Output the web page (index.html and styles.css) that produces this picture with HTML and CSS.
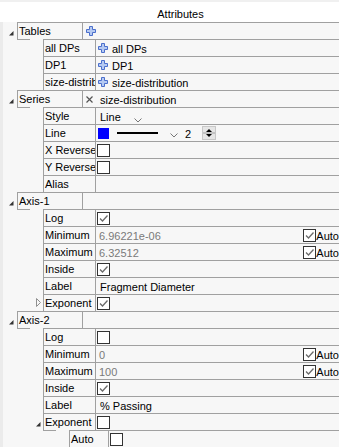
FILE: index.html
```html
<!DOCTYPE html>
<html lang="en">
  <head>
    <meta charset="UTF-8" />
    <title>Attributes</title>
    <link rel="stylesheet" href="styles.css">
  </head>
  <body>
    <div class="title">Attributes</div>
    <div class="tree">
      <!-- Tables -->
      <div class="row l0">
        <span class="gut"><svg class="tw" width="5" height="5"><polygon points="4.5,0 4.5,4.5 0,4.5" /></svg></span>
        <span class="key">Tables</span>
        <span class="val pad0"><svg class="plus" width="10" height="10"><polygon points="3.5,0.5 6.5,0.5 6.5,3.5 9.5,3.5 9.5,6.5 6.5,6.5 6.5,9.5 3.5,9.5 3.5,6.5 0.5,6.5 0.5,3.5 3.5,3.5" /></svg></span>
      </div>
      <div class="row l1 first">
        <span class="gut"></span>
        <span class="key">all DPs</span>
        <span class="val"><svg class="plus" width="10" height="10"><polygon points="3.5,0.5 6.5,0.5 6.5,3.5 9.5,3.5 9.5,6.5 6.5,6.5 6.5,9.5 3.5,9.5 3.5,6.5 0.5,6.5 0.5,3.5 3.5,3.5" /></svg><span class="txt after">all DPs</span></span>
      </div>
      <div class="row l1">
        <span class="gut"></span>
        <span class="key">DP1</span>
        <span class="val"><svg class="plus" width="10" height="10"><polygon points="3.5,0.5 6.5,0.5 6.5,3.5 9.5,3.5 9.5,6.5 6.5,6.5 6.5,9.5 3.5,9.5 3.5,6.5 0.5,6.5 0.5,3.5 3.5,3.5" /></svg><span class="txt after">DP1</span></span>
      </div>
      <div class="row l1">
        <span class="gut"></span>
        <span class="key">size-distrib</span>
        <span class="val"><svg class="plus" width="10" height="10"><polygon points="3.5,0.5 6.5,0.5 6.5,3.5 9.5,3.5 9.5,6.5 6.5,6.5 6.5,9.5 3.5,9.5 3.5,6.5 0.5,6.5 0.5,3.5 3.5,3.5" /></svg><span class="txt after">size-distribution</span></span>
      </div>

      <!-- Series -->
      <div class="row l0">
        <span class="gut"><svg class="tw" width="5" height="5"><polygon points="4.5,0 4.5,4.5 0,4.5" /></svg></span>
        <span class="key">Series</span>
        <span class="val pad0"><svg class="del" width="7" height="7"><path d="M0.5 0.5 L6.5 6.5 M6.5 0.5 L0.5 6.5" /></svg><span class="txt after-x">size-distribution</span></span>
      </div>
      <div class="row l1 first">
        <span class="gut"></span>
        <span class="key">Style</span>
        <span class="val"><span class="txt">Line</span><svg class="chev style-chev" width="8" height="5"><polyline points="0.5,0.5 4,4 7.5,0.5" /></svg></span>
      </div>
      <div class="row l1">
        <span class="gut"></span>
        <span class="key">Line</span>
        <span class="val">
          <span class="swatch"></span>
          <span class="stroke"></span>
          <svg class="chev line-chev" width="8" height="5"><polyline points="0.5,0.5 4,4 7.5,0.5" /></svg>
          <span class="txt width-num">2</span>
          <span class="spin"><svg width="12" height="12"><polygon points="3,5 6,2 9,5" /><polygon points="3,7 6,10 9,7" /><line x1="0" y1="6" x2="12" y2="6" /></svg></span>
        </span>
      </div>
      <div class="row l1">
        <span class="gut"></span>
        <span class="key">X Reverse</span>
        <span class="val"><span class="cb"></span></span>
      </div>
      <div class="row l1">
        <span class="gut"></span>
        <span class="key">Y Reverse</span>
        <span class="val"><span class="cb"></span></span>
      </div>
      <div class="row l1">
        <span class="gut"></span>
        <span class="key">Alias</span>
        <span class="val"></span>
      </div>

      <!-- Axis-1 -->
      <div class="row l0">
        <span class="gut"><svg class="tw" width="5" height="5"><polygon points="4.5,0 4.5,4.5 0,4.5" /></svg></span>
        <span class="key">Axis-1</span>
        <span class="val pad0"></span>
      </div>
      <div class="row l1 first">
        <span class="gut"></span>
        <span class="key">Log</span>
        <span class="val"><span class="cb"><svg width="11" height="11"><polyline points="2,5.5 4.5,8 9.5,2.5" /></svg></span></span>
      </div>
      <div class="row l1">
        <span class="gut"></span>
        <span class="key">Minimum</span>
        <span class="val"><span class="txt dim">6.96221e-06</span><span class="auto"><span class="cb"><svg width="11" height="11"><polyline points="2,5.5 4.5,8 9.5,2.5" /></svg></span><span class="txt">Auto</span></span></span>
      </div>
      <div class="row l1">
        <span class="gut"></span>
        <span class="key">Maximum</span>
        <span class="val"><span class="txt dim">6.32512</span><span class="auto"><span class="cb"><svg width="11" height="11"><polyline points="2,5.5 4.5,8 9.5,2.5" /></svg></span><span class="txt">Auto</span></span></span>
      </div>
      <div class="row l1">
        <span class="gut"></span>
        <span class="key">Inside</span>
        <span class="val"><span class="cb"><svg width="11" height="11"><polyline points="2,5.5 4.5,8 9.5,2.5" /></svg></span></span>
      </div>
      <div class="row l1">
        <span class="gut"></span>
        <span class="key">Label</span>
        <span class="val"><span class="txt">Fragment Diameter</span></span>
      </div>
      <div class="row l1">
        <span class="gut"><svg class="tw-closed" width="5" height="9"><polygon points="0.5,0.5 4.5,4.5 0.5,8.5" /></svg></span>
        <span class="key">Exponent</span>
        <span class="val"><span class="cb"><svg width="11" height="11"><polyline points="2,5.5 4.5,8 9.5,2.5" /></svg></span></span>
      </div>

      <!-- Axis-2 -->
      <div class="row l0">
        <span class="gut"><svg class="tw" width="5" height="5"><polygon points="4.5,0 4.5,4.5 0,4.5" /></svg></span>
        <span class="key">Axis-2</span>
        <span class="val pad0"></span>
      </div>
      <div class="row l1 first">
        <span class="gut"></span>
        <span class="key">Log</span>
        <span class="val"><span class="cb"></span></span>
      </div>
      <div class="row l1">
        <span class="gut"></span>
        <span class="key">Minimum</span>
        <span class="val"><span class="txt dim">0</span><span class="auto"><span class="cb"><svg width="11" height="11"><polyline points="2,5.5 4.5,8 9.5,2.5" /></svg></span><span class="txt">Auto</span></span></span>
      </div>
      <div class="row l1">
        <span class="gut"></span>
        <span class="key">Maximum</span>
        <span class="val"><span class="txt dim">100</span><span class="auto"><span class="cb"><svg width="11" height="11"><polyline points="2,5.5 4.5,8 9.5,2.5" /></svg></span><span class="txt">Auto</span></span></span>
      </div>
      <div class="row l1">
        <span class="gut"></span>
        <span class="key">Inside</span>
        <span class="val"><span class="cb"><svg width="11" height="11"><polyline points="2,5.5 4.5,8 9.5,2.5" /></svg></span></span>
      </div>
      <div class="row l1">
        <span class="gut"></span>
        <span class="key">Label</span>
        <span class="val"><span class="txt">% Passing</span></span>
      </div>
      <div class="row l1">
        <span class="gut"><svg class="tw" width="5" height="5"><polygon points="4.5,0 4.5,4.5 0,4.5" /></svg></span>
        <span class="key">Exponent</span>
        <span class="val"><span class="cb"></span></span>
      </div>
      <div class="row l2 first">
        <span class="gut"></span>
        <span class="key">Auto</span>
        <span class="val"><span class="cb"></span></span>
      </div>
    </div>
  </body>
</html>
```

FILE: styles.css
```css
body {
  margin: 0;
  width: 339px;
  height: 447px;
  overflow: hidden;
  background: #f7f7f7;
  font-family: "Liberation Sans", Arial, sans-serif;
  font-size: 11px;
  color: #000;
}
.title {
  box-sizing: border-box;
  height: 22px;
  padding: 5px 0 0 22px;
  line-height: 14px;
  text-align: center;
  background: #fff;
  border-top: 2px solid #f0f0f0;
}
.tree {
  border-left: 3px solid #ebebeb;
}
.row {
  display: flex;
  height: 17px;
}
.gut {
  flex: none;
  box-sizing: border-box;
  display: flex;
  justify-content: flex-end;
  align-items: center;
}
.l0 .gut {
  width: 14px;
  padding-right: 3px;
}
.l1 .gut {
  width: 40px;
  padding-right: 2px;
}
.l2 .gut {
  width: 66px;
}
/* little stub under an open group's label */
.l1.first .gut {
  background: linear-gradient(#a0a0a0, #a0a0a0) no-repeat 14px 0 / 13px 1px;
}
.l2.first .gut {
  background: linear-gradient(#a0a0a0, #a0a0a0) no-repeat 40px 0 / 13px 1px;
}
.tw {
  align-self: flex-end;
  margin-bottom: 3px;
  fill: #333;
}
.tw-closed {
  fill: none;
  stroke: #909090;
}
.key {
  flex: none;
  box-sizing: border-box;
  border: 1px solid #a0a0a0;
  border-bottom: 0;
  padding: 1px 0 0 1px;
  line-height: 15px;
  white-space: nowrap;
  overflow: hidden;
}
.l0 .key {
  width: 66px;
}
.l1 .key {
  width: 53px;
}
.l2 .key {
  width: 40px;
}
.val {
  flex: 1;
  min-width: 0;
  display: flex;
  align-items: center;
  padding-left: 2px;
  border-top: 1px solid #a0a0a0;
  white-space: nowrap;
  overflow: hidden;
}
.val.pad0 {
  padding-left: 3px;
}
.txt {
  padding: 2px 0 0 2px;
  line-height: 14px;
}
.txt.dim {
  padding-left: 1px;
  color: #7a7a7a;
}
.txt.after {
  padding-left: 4px;
}
.txt.after-x {
  padding-left: 7px;
}
.plus {
  fill: #b6caf2;
  stroke: #4b6fcc;
}
.del {
  stroke: #555;
  stroke-width: 1.2;
}
.chev {
  fill: none;
  stroke: #777;
}
.style-chev {
  margin: 9px 0 0 13px;
}
.line-chev {
  margin: 5px 0 0 12px;
}
.swatch {
  width: 11px;
  height: 11px;
  margin-left: 0;
  background: #0000ff;
}
.stroke {
  width: 41px;
  height: 2px;
  margin-left: 8px;
  background: #000;
}
.width-num {
  padding-left: 7px;
}
.spin {
  box-sizing: border-box;
  width: 14px;
  height: 14px;
  margin-left: 11px;
  display: flex;
  align-items: center;
  justify-content: center;
  background: #e6e6e6;
  border: 1px solid #c8c8c8;
}
.spin polygon {
  fill: #000;
}
.spin line {
  stroke: #a0a0a0;
}
.cb {
  flex: none;
  box-sizing: border-box;
  width: 13px;
  height: 13px;
  margin-left: -1px;
  background: #fff;
  border: 1px solid #333;
}
.cb svg {
  display: block;
  fill: none;
  stroke: #6a6a6a;
  stroke-width: 1.3;
}
.auto {
  display: flex;
  align-items: center;
  margin-left: auto;
}
.auto .cb {
  margin-left: 0;
}
.auto .txt {
  padding-left: 0;
}
```
